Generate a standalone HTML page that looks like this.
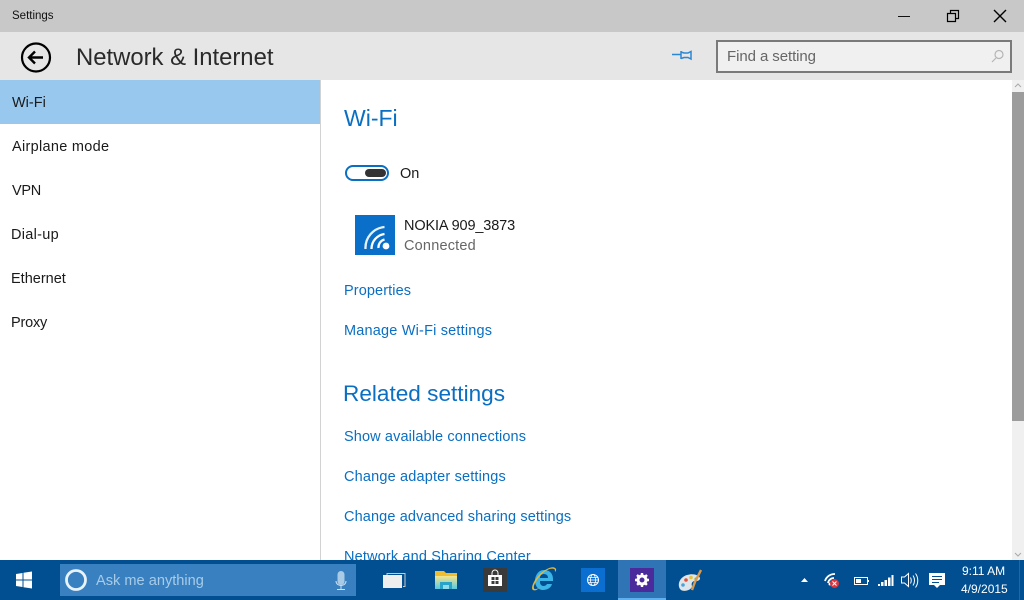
<!DOCTYPE html>
<html><head><meta charset="utf-8"><style>
html,body{margin:0;padding:0}
body{width:1024px;height:600px;overflow:hidden;position:relative;background:#fff;font-family:"Liberation Sans",sans-serif;color:#000}
.a{position:absolute;white-space:nowrap}
.t{position:absolute;white-space:nowrap;line-height:20px;font-size:14.5px;color:#1a1a1a}
.t.l{color:#0a6fc2}
svg{position:absolute;overflow:visible}
</style></head><body>
<div class="a" style="left:0;top:0;width:1024px;height:32px;background:#c8c8c8"></div>
<div class="a" style="left:0;top:32px;width:1024px;height:48px;background:#e6e6e6"></div>
<div class="a" style="left:0;top:80px;width:320px;height:44px;background:#99c8ef"></div>
<div class="a" style="left:320px;top:80px;width:1px;height:480px;background:#d2d2d2"></div>
<div class="t" style="left:12px;top:6px;font-size:11.500px;color:#111">Settings</div>
<svg style="left:0;top:0" width="1024" height="80" fill="none" stroke="#000">
<path d="M898 16.500h12" stroke="#111"/>
<path d="M947.500 13.500h8v8h-8zM950.500 13.500v-3h8v8h-3" stroke="#000" stroke-width="1.200"/>
<path d="M994 10l12 12M1006 10l-12 12" stroke-width="1.400"/>
<circle cx="36" cy="57.500" r="14" stroke-width="2.200"/>
<path d="M43 57.500H29.500M35 51.500L29 57.500l6 6" stroke-width="2.400"/>
<path d="M672 54.500h9M681 51v8M681 52l3 1h4l3-1.500v7.500l-3-1.500h-4l-3 1" stroke="#2b87d3" stroke-width="1.500"/>
</svg>
<div class="t" style="left:76px;top:43px;font-size:23.850px;line-height:30px;color:#2a2a2a">Network &amp; Internet</div>
<div class="a" style="left:716px;top:40px;width:292px;height:29px;border:2px solid #7a7a7a;background:#f0f0f0"></div>
<div class="t" style="left:727px;top:47px;font-size:15px;color:#666;letter-spacing:-.08px">Find a setting</div>
<svg style="left:0;top:0" width="1024" height="80" fill="none" stroke="#b5b5b5" stroke-width="1.200"><circle cx="999" cy="54.500" r="4"/><path d="M996 58l-4 4"/></svg>

<div class="t" style="left:12px;top:93px">Wi-Fi</div>
<div class="t" style="left:12px;top:137px;letter-spacing:.3px">Airplane mode</div>
<div class="t" style="left:12px;top:181px;letter-spacing:-.3px">VPN</div>
<div class="t" style="left:11px;top:225px;letter-spacing:.3px">Dial-up</div>
<div class="t" style="left:11px;top:269px">Ethernet</div>
<div class="t" style="left:11px;top:313px;letter-spacing:-.2px">Proxy</div>

<div class="t l" style="left:344px;top:103px;font-size:23px;line-height:30px">Wi-Fi</div>
<div class="a" style="left:345px;top:165px;width:40px;height:12px;border:2px solid #0a6fc2;border-radius:8px"></div>
<div class="a" style="left:365px;top:169px;width:21px;height:8px;background:#333;border-radius:4px"></div>
<div class="t" style="left:400px;top:164px">On</div>
<div class="a" style="left:355px;top:215px;width:40px;height:40px;background:#0a6fc9"></div>
<svg style="left:355px;top:215px" width="40" height="40" fill="none" stroke="#fff" stroke-width="2.300"><circle cx="31" cy="31" r="3.400" fill="#fff" stroke="none"/><path d="M23.500 33a8 8 0 0 1 6-8.500"/><path d="M16.500 34a15 15 0 0 1 13-15"/><path d="M10.500 34a21 21 0 0 1 19-22" opacity=".9"/></svg>
<div class="t" style="left:404px;top:216px;letter-spacing:-.13px">NOKIA 909_3873</div>
<div class="t" style="left:404px;top:236px;color:#666;letter-spacing:.2px">Connected</div>
<div class="t l" style="left:344px;top:281px;letter-spacing:.1px">Properties</div>
<div class="t l" style="left:344px;top:321px;letter-spacing:.19px">Manage Wi-Fi settings</div>
<div class="t l" style="left:343px;top:379px;font-size:22.600px;line-height:30px">Related settings</div>
<div class="t l" style="left:344px;top:427px;letter-spacing:.12px">Show available connections</div>
<div class="t l" style="left:344px;top:467px;letter-spacing:.17px">Change adapter settings</div>
<div class="t l" style="left:344px;top:507px;letter-spacing:.125px">Change advanced sharing settings</div>
<div class="t l" style="left:344px;top:547px;letter-spacing:.15px">Network and Sharing Center</div>

<div class="a" style="left:1012px;top:80px;width:12px;height:480px;background:#f0f0f0"></div>
<div class="a" style="left:1012px;top:92px;width:12px;height:329px;background:#9c9c9c"></div>
<svg style="left:1012px;top:80px" width="12" height="480" fill="none" stroke="#aaa"><path d="M3 7l3-3 3 3M3 473l3 3 3-3"/></svg>

<div class="a" style="left:0;top:560px;width:1024px;height:40px;background:#014f91"></div>
<div class="a" style="left:60px;top:564px;width:296px;height:32px;background:#3880bf"></div>
<svg style="left:0;top:560px" width="1024" height="40" fill="none">
<defs><linearGradient id="f" x1="0" y1="0" x2="0" y2="1"><stop offset="0" stop-color="#f7e58c"/><stop offset="1" stop-color="#58c8e6"/></linearGradient></defs>
<path d="M16 14l6.500-1v6.500H16zM23.500 12.800l8.500-1.300v8H23.500zM16 20.500h6.500V27l-6.500-1zM23.500 20.500H32v8l-8.500-1.300z" fill="#fff"/>
<circle cx="76" cy="20" r="9.500" stroke="#e8f2fa" stroke-width="2.800"/>
<path d="M337.500 14.500a3.500 3.500 0 0 1 7 0v7a3.500 3.500 0 0 1-7 0z" fill="#a9cbe6"/>
<path d="M336 21c0 6 10 6 10 0M341 26v3M337 29.500h8" stroke="#cfe2f2" stroke-width="1"/>
<path d="M387 15v-1.500h18v13h-2" stroke="#c9c9c9"/><rect x="383.500" y="15.500" width="18" height="12" fill="#eee" stroke="#eee"/>
<path d="M435 11h9l2 2h11v6h-22z" fill="#eebd30"/><path d="M435 16h22v13h-22z" fill="url(#f)"/><path d="M440 22h12v7h-12z" fill="#2aa3c9"/><path d="M443 25h6v4h-6z" fill="#8fdcec"/>
<rect x="483" y="8" width="24" height="24" fill="#3a3a3a"/><path d="M488 15h14v11h-14z" fill="#fff"/><path d="M492 15v-2a3 3 0 0 1 6 0v2" stroke="#fff"/><path d="M491.500 17h3v3h-3zM495.500 17h3v3h-3zM491.500 21h3v3h-3zM495.500 21h3v3h-3z" fill="#3a3a3a"/>
<path d="M553 19c0-6-4-9-9-9-6 0-9 6-9 11s3 9 8 9c4 0 8-2 9-6h-5c-1 2-3 2-4 2-3-1-3-3-3-5h13zM540 18c0-3 2-4 4-4 3 0 4 2 4 4z" fill="#3bb4e8"/>
<path d="M555 8c-2-2-8 0-14 5s-11 15-8 17c2 1 4 0 6-2-2 1-5 2-5 0-1-3 4-10 8-14 5-5 10-6 12-5 1 0 1 2 1 3 1-1 2-3 0-4z" fill="#e5b73b"/>
<rect x="581" y="8" width="24" height="24" fill="#0a6fd1"/><circle cx="593" cy="20" r="5.500" stroke="#fff"/><ellipse cx="593" cy="20" rx="2.500" ry="5.500" stroke="#fff" stroke-width=".8"/><path d="M587.500 20h11M588.500 17.500h9M588.500 22.500h9" stroke="#fff" stroke-width=".7"/>
<rect x="618" y="0" width="48" height="40" fill="#2f75b5"/><rect x="618" y="38" width="48" height="2" fill="#5fb0ee"/>
<rect x="630" y="8" width="24" height="24" fill="#4b2a9c"/><circle cx="642" cy="20" r="4" stroke="#fff" stroke-width="3"/><path d="M642 13v14M635 20h14M637 15l10 10M647 15l-10 10" stroke="#fff" stroke-width="2.400" stroke-dasharray="2.500 9 2.500"/>
<path d="M680 29c-3-5 0-12 7-14 6-2 12 0 13 3 0 3-3 3-5 3-3 0-4 3-3 5 0 4-9 7-12 3z" fill="#dfe6ea"/><circle cx="686" cy="20" r="1.800" fill="#e0503a"/><circle cx="691" cy="17.500" r="1.800" fill="#e8c23a"/><circle cx="683" cy="25" r="1.800" fill="#4ba3d9"/><circle cx="696" cy="19" r="1.500" fill="#63b04a"/>
<path d="M701 10l-6 12-3 8" stroke="#d99a4e" stroke-width="2.400"/>
<path d="M801 22l3.500-4 3.500 4z" fill="#fff"/>
<path d="M825 21a10 10 0 0 1 10-7M828 23a6 6 0 0 1 6-5" stroke="#fff" stroke-width="1.800"/><circle cx="830" cy="24" r="1.500" fill="#fff"/>
<circle cx="834.500" cy="23.500" r="4.500" fill="#d9363e"/><path d="M832.500 21.500l4 4M836.500 21.500l-4 4" stroke="#fff"/>
<rect x="854.500" y="17.500" width="13" height="7" stroke="#fff"/><rect x="856" y="19" width="5" height="4" fill="#fff"/><path d="M868.500 20v2" stroke="#fff"/>
<path d="M878 24h2v2h-2zM881 22h2.500v4H881zM884.500 20h2.500v6h-2.500zM888 17.500h2.500V26H888zM891.500 15h2v11h-2z" fill="#fff"/>
<path d="M901.500 17h3l4-3.500v13l-4-3.500h-3zM910.500 17.500c1 2 1 4 0 6M913 15.500c2 3 2 7 0 10M915.500 13.500c3 4 3 10 0 14" stroke="#fff"/>
<path d="M929 13h16v12h-5l-3 3-3-3h-5z" fill="#fff"/><path d="M932 16.500h10M932 19.500h10M932 22.500h7" stroke="#014f91"/>
<path d="M1019.500 0v40" stroke="#1f66a5"/>
</svg>
<div class="t" style="left:96px;top:571px;color:#a7cbe8;font-size:14.600px">Ask me anything</div>
<div class="t" style="left:962px;top:561px;color:#fff;font-size:12px">9:11 AM</div>
<div class="t" style="left:961px;top:579px;color:#fff;font-size:12px">4/9/2015</div>
</body></html>
